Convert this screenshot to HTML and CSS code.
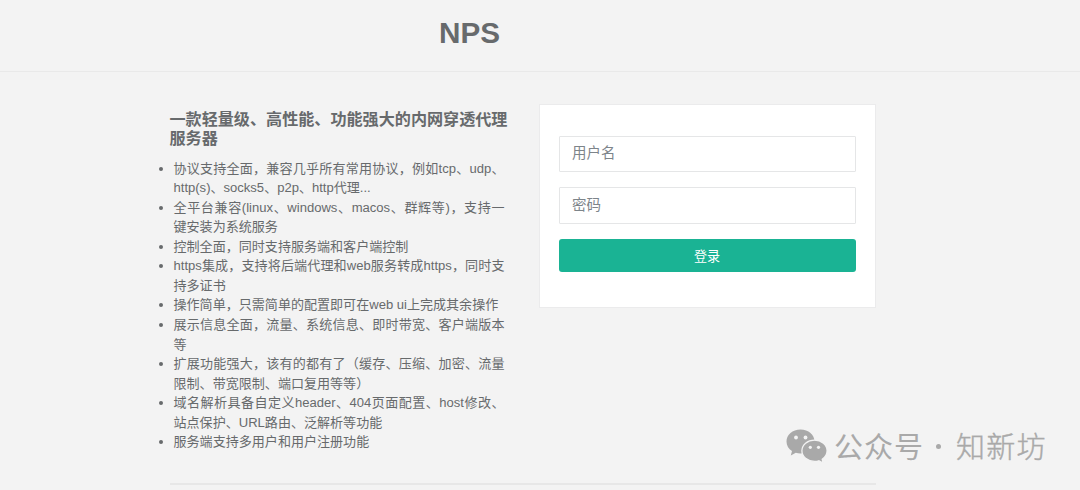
FILE: index.html
```html
<!DOCTYPE html>
<html lang="zh-CN">
<head>
<meta charset="utf-8">
<title>NPS</title>
<link rel="stylesheet" href="styles.css">
</head>
<body>
<header class="header"><h1 class="brand">NPS</h1></header>
<main class="content">
  <section class="intro">
    <h2 class="intro-title">一款轻量级、高性能、功能强大的内网穿透代理<br>服务器</h2>
    <ul class="features">
      <li><span class="full">协议支持全面，兼容几乎所有常用协议，例如tcp、udp、</span>http(s)、socks5、p2p、http代理...</li>
      <li><span class="full">全平台兼容(linux、windows、macos、群辉等)，支持一</span>键安装为系统服务</li>
      <li>控制全面，同时支持服务端和客户端控制</li>
      <li><span class="full">https集成，支持将后端代理和web服务转成https，同时支</span>持多证书</li>
      <li>操作简单，只需简单的配置即可在web ui上完成其余操作</li>
      <li><span class="full">展示信息全面，流量、系统信息、即时带宽、客户端版本</span>等</li>
      <li><span class="full">扩展功能强大，该有的都有了（缓存、压缩、加密、流量</span>限制、带宽限制、端口复用等等）</li>
      <li><span class="full">域名解析具备自定义header、404页面配置、host修改、</span>站点保护、URL路由、泛解析等功能</li>
      <li>服务端支持多用户和用户注册功能</li>
    </ul>
  </section>
  <form class="card">
    <input class="field" type="text" placeholder="用户名">
    <input class="field field-password" type="password" placeholder="密码">
    <button class="submit" type="button">登录</button>
  </form>
</main>
<div class="watermark">
  <svg class="wechat" viewBox="0 0 42 34" width="42" height="34">
    <path fill="#a9a9a9" d="M14.500 0.500C6.500 0.500 0.500 5.800 0.500 12.500c0 4 2 7.300 5.500 9.600L4.800 26.500l5-2.700c1.500.4 3 .7 4.700.7 8 0 14-5.300 14-12s-6-12-14-12z"/>
    <path fill="#a9a9a9" stroke="#f3f3f3" stroke-width="1.300" d="M28.500 11.200c-7 0-12.600 4.600-12.600 10.600s5.600 10.600 12.600 10.600c1.600 0 3-.2 4.300-.6l4.400 2.300-1-3.900c3-2 4.900-5 4.900-8.400 0-6-5.600-10.600-12.600-10.600z"/>
    <g fill="#f3f3f3"><circle cx="10" cy="8.500" r="1.900"/><circle cx="19.500" cy="8.500" r="1.900"/><circle cx="24.300" cy="18.300" r="1.600"/><circle cx="32.500" cy="18.300" r="1.600"/></g>
  </svg>
  <span class="wm-label">公众号</span><span class="wm-dot"></span><span class="wm-name">知新坊</span>
</div>
</body>
</html>
```
FILE: styles.css
```css
* { box-sizing: border-box; }
body {
  margin: 0;
  height: 490px;
  overflow: hidden;
  background: #f3f3f3;
  color: #676a6c;
  font-family: "Liberation Sans", "Noto Sans CJK SC", sans-serif;
}
.header {
  height: 72px;
  padding: 15px 0 0 439px;
  border-bottom: 1px solid #e9e9e9;
}
.brand { margin: 0; font-size: 29.7px; line-height: 36px; }
.content {
  display: flex;
  align-items: flex-start;
  width: 706.4px;
  height: 413px;
  margin-left: 169.5px;
  padding-top: 32px;
  border-bottom: 2px solid #e7e7e7;
}
.intro { flex: none; width: 369.5px; padding-top: 5.5px; white-space: nowrap; }
.intro-title { margin: 0 0 10px; font-size: 16.1px; line-height: 19.5px; }
.features {
  width: 335px;
  margin: 0;
  padding: 0 0 0 4px;
  font-size: 13.06px;
  line-height: 19.57px;
}
.full {
  display: block;
  width: 331px;
  white-space: normal;
  text-align: justify;
  text-align-last: justify;
}
.card {
  display: flex;
  flex-direction: column;
  flex: none;
  width: 337px;
  height: 204px;
  margin: 0;
  padding: 31px 19px 29px;
  background: #fff;
  border: 1px solid #ebebec;
}
.field {
  flex: none;
  width: 297px;
  height: 36px;
  margin: 0 0 15px;
  padding: 0 12px 2px;
  background: #fff;
  border: 1px solid #e5e6e7;
  border-radius: 1px;
  font: 14.5px "Liberation Sans", "Noto Sans CJK SC", sans-serif;
}
.field-password { height: 37px; padding-bottom: 1px; }
.field::placeholder { color: #7d848a; opacity: 1; }
.submit {
  width: 297px;
  height: 33px;
  padding: 0 1px 0 0;
  background: #1ab394;
  border: 0;
  border-radius: 3px;
  color: #fff;
  font: 13.1px "Liberation Sans", "Noto Sans CJK SC", sans-serif;
}
.watermark {
  position: absolute;
  left: 786px;
  top: 423px;
  display: flex;
  align-items: center;
  height: 44px;
  color: #a9a9a9;
  font: 29px/44px "Noto Sans CJK SC", sans-serif;
  white-space: nowrap;
}
.wechat { margin-top: 2px; }
.wm-label { margin-left: 6px; letter-spacing: 1px; }
.wm-dot {
  width: 5px;
  height: 5px;
  margin: 2px 15px 0 12px;
  border-radius: 50%;
  background: #a9a9a9;
}
.wm-name {
  font-weight: 300;
  letter-spacing: 1.200px;
  -webkit-text-stroke: 0.400px #a9a9a9;
}
```
